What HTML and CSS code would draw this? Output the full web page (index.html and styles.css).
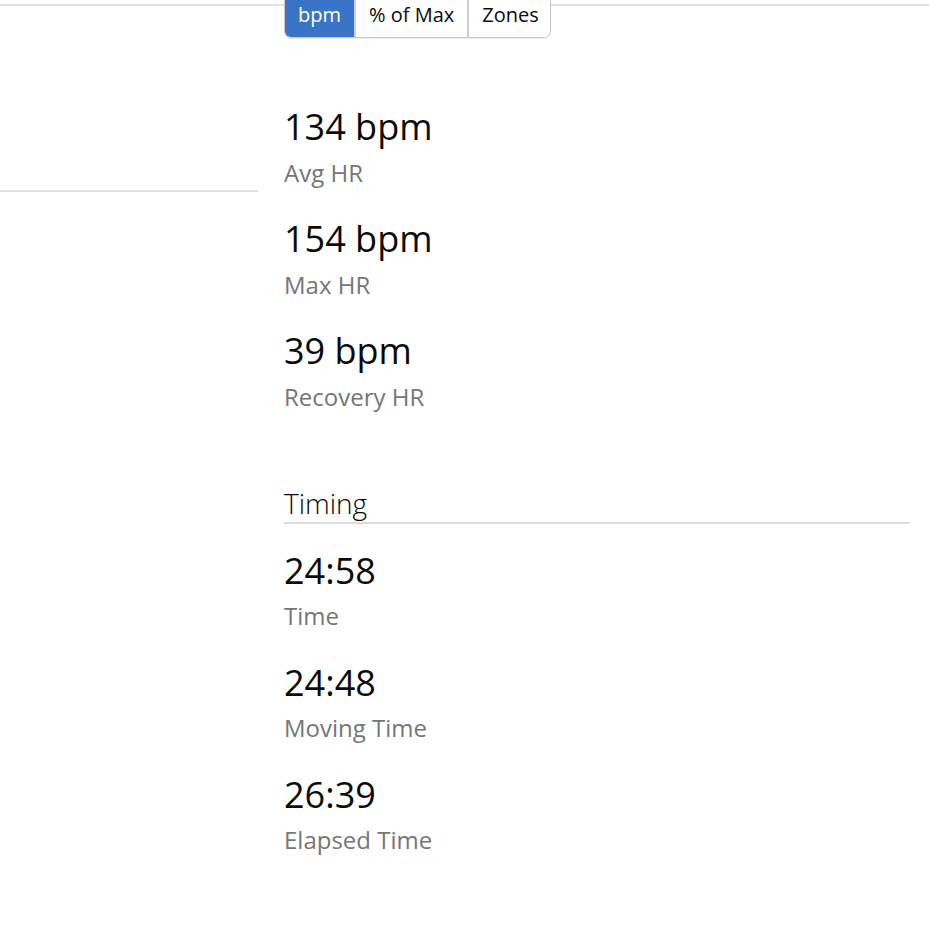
FILE: index.html
```html
<!DOCTYPE html>
<html lang="en">
<head>
<meta charset="utf-8">
<title>Heart Rate and Timing</title>
<link rel="stylesheet" href="styles.css">
</head>
<body>
<div class="topbar"></div>
<div class="layout">
  <aside class="side">
    <div class="side-panel"></div>
  </aside>
  <main class="content">
    <div class="toggle">
      <span class="seg active">bpm</span>
      <span class="seg">% of Max</span>
      <span class="seg">Zones</span>
    </div>
    <section class="stats first">
      <div class="stat">
        <div class="value">134 bpm</div>
        <div class="label">Avg HR</div>
      </div>
      <div class="stat">
        <div class="value">154 bpm</div>
        <div class="label">Max HR</div>
      </div>
      <div class="stat">
        <div class="value">39 bpm</div>
        <div class="label">Recovery HR</div>
      </div>
    </section>
    <h2 class="section-title">Timing</h2>
    <section class="stats">
      <div class="stat">
        <div class="value">24:58</div>
        <div class="label">Time</div>
      </div>
      <div class="stat">
        <div class="value">24:48</div>
        <div class="label">Moving Time</div>
      </div>
      <div class="stat">
        <div class="value">26:39</div>
        <div class="label">Elapsed Time</div>
      </div>
    </section>
  </main>
</div>
</body>
</html>
```
FILE: styles.css
```css
html, body {
  margin: 0;
  padding: 0;
  background: #ffffff;
}
body {
  font-family: "Open Sans", "Noto Sans", "Liberation Sans", sans-serif;
  color: #0a0a0a;
  overflow: hidden;
}
.topbar {
  height: 4px;
  border-bottom: 2px solid #e3e3e3;
}
.layout {
  display: grid;
  grid-template-columns: 258px 1fr;
  column-gap: 26px;
  padding-right: 19px;
}
.side-panel {
  height: 184px;
  border-bottom: 2px solid #e0e0e0;
}
.content {
  min-width: 0;
}
.toggle {
  position: relative;
  z-index: 1;
  display: flex;
  width: fit-content;
  margin-top: -14px;
  border: 1px solid #c8c8c8;
  border-top: none;
  border-radius: 0 0 7px 7px;
  overflow: hidden;
  box-shadow: 0 1px 1px rgba(0,0,0,0.08);
}
.seg {
  font-size: 20px;
  line-height: 28px;
  padding: 9px 13px 8px;
  color: #0a0a0a;
  background: #fff;
  border-left: 2px solid #cfcfcf;
}
.seg:first-child {
  border-left: none;
}
.seg:last-child {
  padding-right: 11px;
}
.seg.active {
  background: #3a74c9;
  color: #ffffff;
}
.stats {
  display: flex;
  flex-direction: column;
  gap: 28.5px;
}
.stats.first {
  margin-top: 67px;
}
.stat .value {
  font-size: 36px;
  line-height: 44px;
  color: #0a0a0a;
}
.stat .label {
  font-size: 24px;
  line-height: 32px;
  color: #767676;
  margin-top: 7.5px;
}
.section-title {
  margin: 72px 0 25px;
  font-size: 28px;
  font-weight: 300;
  line-height: 36px;
  padding-bottom: 1px;
  border-bottom: 2px solid #dcdcdc;
  color: #0a0a0a;
}
```
